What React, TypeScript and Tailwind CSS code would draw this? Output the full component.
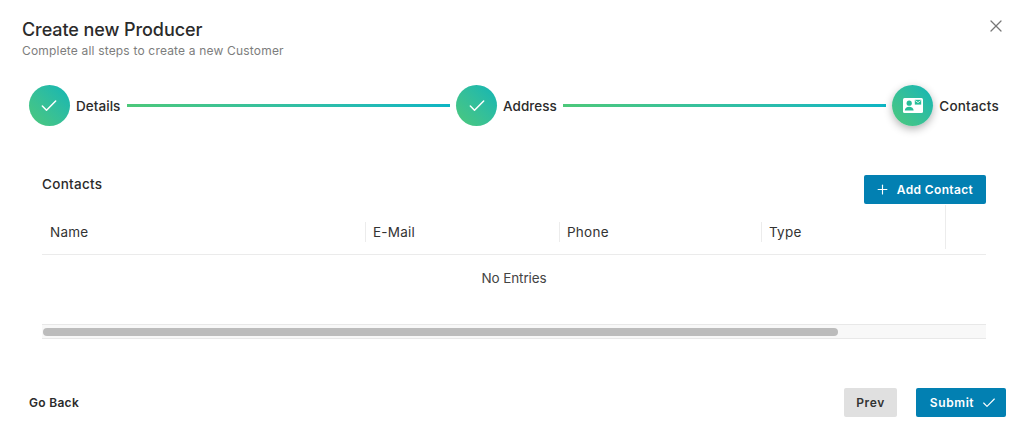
import { Check, Plus, X } from "lucide-react";

const font = { fontFamily: "Inter, 'Liberation Sans', sans-serif" };

function StepCircle({ children, active }: { children: React.ReactNode; active?: boolean }) {
  return (
    <div
      className={`flex h-[41px] w-[41px] shrink-0 items-center justify-center rounded-full bg-gradient-to-tr from-[#4cc87a] to-[#0cb5b5] text-white ${
        active ? "shadow-[0_3px_9px_rgba(0,0,0,0.3)]" : ""
      }`}
    >
      {children}
    </div>
  );
}

function Line() {
  return <div className="mx-[6.5px] h-[3px] flex-1 bg-gradient-to-r from-[#4cc87a] to-[#0cb5c4]" />;
}

function ContactIcon() {
  return (
    <svg width="20" height="15" viewBox="0 0 20 15">
      <rect width="20" height="15" rx="1.5" fill="#fff" />
      <circle cx="6.2" cy="5.2" r="2.6" fill="#26bd98" />
      <path d="M1.8 12.6c0-2.5 2-3.9 4.4-3.9s4.4 1.4 4.4 3.9z" fill="#26bd98" />
      <rect x="11.8" y="1.8" width="6.4" height="4.8" fill="#26bd98" />
      <path d="M12.3 2.6l2.7 2 2.7-2" fill="none" stroke="#fff" strokeWidth="0.8" />
    </svg>
  );
}

function HeaderCell({ label, width, inset }: { label: string; width: string; inset: string }) {
  return (
    <div className={`flex h-[20px] items-center border-r border-[#ececec] text-[13.5px] tracking-[0.25px] text-[#333] ${width} ${inset}`}>
      {label}
    </div>
  );
}

export default function App() {
  return (
    <div style={font} className="relative flex h-[436px] w-[1024px] flex-col overflow-hidden bg-white text-[#2b2b2b]">
      <button className="absolute right-[18px] top-[16px] text-[#777]">
        <X size={20} strokeWidth={1.5} />
      </button>

      <div className="pl-[22px] pt-[19px]">
        <h1 className="text-[18px] leading-[22px] font-medium tracking-[-0.08px] text-[#2b2b2b]">Create new Producer</h1>
        <p className="mt-[1px] text-[12px] leading-[18px] tracking-[0.18px] text-[#7d7d7d]">Complete all steps to create a new Customer</p>
      </div>

      <div className="mt-[25px] flex h-[41px] items-center pl-[29px] pr-[25px]">
        <StepCircle><Check size={20} strokeWidth={1.8} className="-ml-[1px]" /></StepCircle>
        <span className="ml-[6px] mt-[1px] text-[13.5px] font-medium tracking-[0.05px]">Details</span>
        <Line />
        <StepCircle><Check size={20} strokeWidth={1.8} /></StepCircle>
        <span className="ml-[6px] mt-[1px] text-[13.5px] font-medium">Address</span>
        <Line />
        <StepCircle active><ContactIcon /></StepCircle>
        <span className="ml-[6px] mt-[1px] text-[13.5px] font-medium tracking-[0.2px]">Contacts</span>
      </div>

      <div className="mt-[49px] pl-[42px] pr-[38px]">
        <div className="flex h-[29px] items-start justify-between">
          <h2 className="mt-[1px] text-[13.5px] leading-[16px] font-medium tracking-[0.3px]">Contacts</h2>
          <button className="flex h-[29px] w-[122px] items-center justify-center gap-[7px] rounded-[2px] bg-[#0280b2] pr-[2px] text-[12px] font-semibold tracking-[0.35px] text-white">
            <Plus size={15} strokeWidth={1.8} />
            Add Contact
          </button>
        </div>

        <div className="relative mt-[6px] flex h-[45px] items-center border-b border-[#ebebeb]">
          <HeaderCell label="Name" width="w-[324px]" inset="pl-2" />
          <HeaderCell label="E-Mail" width="w-[194px]" inset="pl-[7px]" />
          <HeaderCell label="Phone" width="w-[202px]" inset="pl-[7px]" />
          <HeaderCell label="Type" width="w-[184px]" inset="pl-[7px]" />
          <div className="absolute left-[903px] top-[-5px] h-[44px] w-px bg-[#ececec]" />
        </div>

        <div className="flex h-[46px] items-center justify-center text-[13.5px] tracking-[-0.1px] text-[#444]">No Entries</div>

        <div className="mt-[23px] flex h-[15px] items-center border-y border-[#e8e8e8] bg-[#f8f8f8] pl-px">
          <div className="h-[8px] w-[795px] rounded-full bg-[#bcbcbc]" />
        </div>
      </div>

      <div className="mt-[49px] flex items-center justify-between pl-[29px] pr-[18px]">
        <button className="text-[12px] font-semibold tracking-[0.3px] text-[#2b2b2b]">Go Back</button>
        <div className="flex gap-[19px]">
          <button className="h-[29px] w-[53px] rounded-[2px] bg-[#e0e0e0] text-[12px] font-semibold tracking-[0.6px] text-[#333]">Prev</button>
          <button className="flex h-[29px] w-[90px] items-center justify-center gap-[7px] rounded-[2px] bg-[#0280b2] pl-[5px] text-[12px] font-semibold tracking-[0.6px] text-white">
            Submit
            <Check size={16} strokeWidth={1.7} />
          </button>
        </div>
      </div>
    </div>
  );
}
